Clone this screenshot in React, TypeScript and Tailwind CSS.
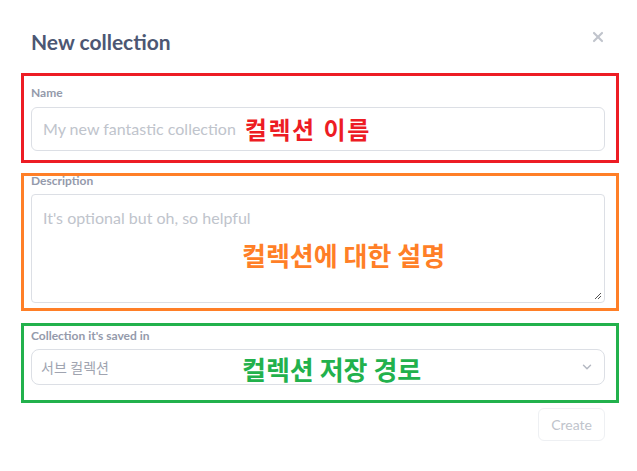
import { ChevronDown, X } from "lucide-react";

const font = "font-['Lato','Noto_Sans_CJK_KR',sans-serif]";
const noteFont = "font-['Noto_Sans_CJK_KR',sans-serif] font-bold";

const App = () => {
  return (
    <div className={`w-[637px] h-[471px] bg-white ${font}`}>
      <div className="pl-[31px] pr-[32px] pt-[30px] flex flex-col">
        <div className="flex items-center justify-between">
          <h2 className="text-[21px] leading-[24px] font-bold text-[#4c5773]">New collection</h2>
          <button className="text-[#c0c4cc] -mr-[1px] -mt-[11px]">
            <X size={16} strokeWidth={3.2} />
          </button>
        </div>

        {/* Name */}
        <div className="relative mt-[32px] flex flex-col gap-[7px]">
          <label className="text-[12px] leading-[14px] font-bold text-[#949aab]">Name</label>
          <div className="h-[44px] rounded-[6px] border border-[#dcdfe5] flex items-center gap-[9px] px-[11px] text-[16px] text-[#c0c4cc]">
            My new fantastic collection
            <span className={`text-[24px] leading-[24px] tracking-[1.5px] [word-spacing:1px] text-[#ed1c24] ${noteFont}`}>
              컬렉션 이름
            </span>
          </div>
          <div className="absolute top-[-13px] bottom-[-12px] left-[-10px] right-[-14px] border-[3px] border-[#ed1c24] pointer-events-none" />
        </div>

        {/* Description */}
        <div className="relative mt-[23px] flex flex-col gap-[6px]">
          <label className="text-[12px] leading-[14px] font-bold text-[#949aab]">Description</label>
          <div className="h-[109px] rounded-[4px] border border-[#dcdfe5] px-[11px] pt-[11px] text-[16px] text-[#c0c4cc] relative flex flex-col">
            It's optional but oh, so helpful
            <span className={`mt-[12px] ml-[199px] text-[26px] leading-[26px] text-[#ff7f27] ${noteFont}`}>
              컬렉션에 대한 설명
            </span>
            <svg className="absolute right-[2px] bottom-[2px]" width="8" height="8" viewBox="0 0 8 8">
              <path d="M7 1 L1 7 M7 4 L4 7" stroke="#555" strokeWidth="1" />
            </svg>
          </div>
          <div className="absolute top-[-1px] bottom-[-8px] left-[-10px] right-[-14px] border-[3px] border-[#ff7f27] pointer-events-none" />
        </div>

        {/* Collection */}
        <div className="relative mt-[26px] flex flex-col gap-[6px]">
          <label className="text-[12px] leading-[14px] font-bold text-[#949aab]">Collection it's saved in</label>
          <div className="h-[36px] rounded-[8px] border border-[#dcdfe5] flex items-center pl-[9px] pr-[10px]">
            <span className="text-[14px] text-[#a0a4b0] w-[201px]">서브 컬렉션</span>
            <span className={`flex-1 pt-[4px] text-[26px] leading-[26px] text-[#22b14c] ${noteFont}`}>
              컬렉션 저장 경로
            </span>
            <ChevronDown size={14} strokeWidth={2.5} className="text-[#b4b8c2]" />
          </div>
          <div className="absolute top-[-6px] bottom-[-18px] left-[-10px] right-[-14px] border-[3px] border-[#22b14c] pointer-events-none" />
        </div>

        <div className="flex justify-end mt-[23px]">
          <button className="h-[33px] px-[12px] rounded-[6px] border border-[#eef0f3] text-[14px] text-[#c0c4cc]">
            Create
          </button>
        </div>
      </div>
    </div>
  );
};

export default App;
